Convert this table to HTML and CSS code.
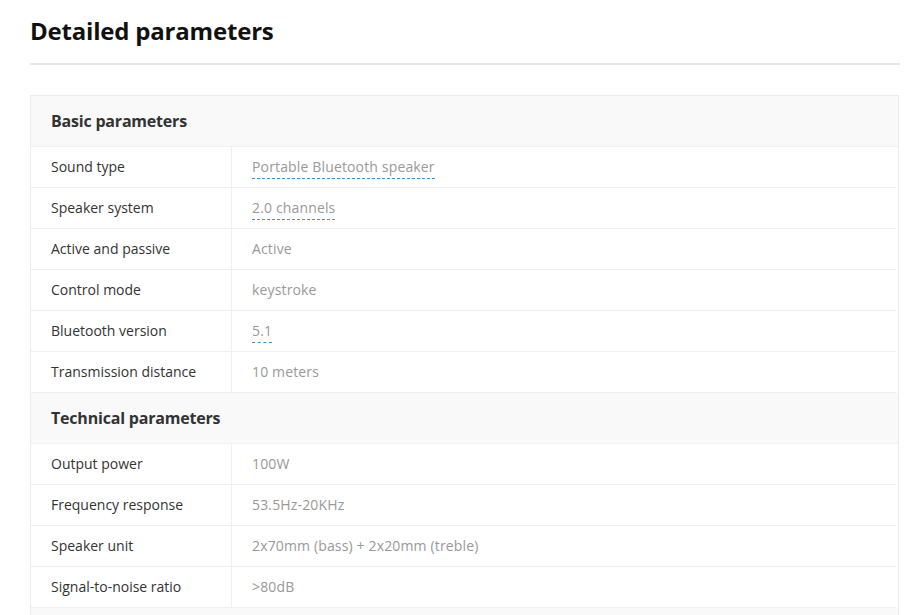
FILE: index.html
```html
<!DOCTYPE html>
<html>
<head>
<meta charset="utf-8">
<link rel="stylesheet" href="styles.css">
</head>
<body>
<div class="page">
  <h1 class="title">Detailed parameters</h1>
  <div class="params">
    <div class="group-head">Basic parameters</div>
    <div class="row"><div class="label">Sound type</div><div class="value"><span class="link">Portable Bluetooth speaker</span></div></div>
    <div class="row"><div class="label">Speaker system</div><div class="value"><span class="link">2.0 channels</span></div></div>
    <div class="row"><div class="label">Active and passive</div><div class="value">Active</div></div>
    <div class="row"><div class="label">Control mode</div><div class="value">keystroke</div></div>
    <div class="row"><div class="label">Bluetooth version</div><div class="value"><span class="link">5.1</span></div></div>
    <div class="row"><div class="label">Transmission distance</div><div class="value">10 meters</div></div>
    <div class="group-head">Technical parameters</div>
    <div class="row"><div class="label">Output power</div><div class="value">100W</div></div>
    <div class="row"><div class="label">Frequency response</div><div class="value">53.5Hz-20KHz</div></div>
    <div class="row"><div class="label">Speaker unit</div><div class="value">2x70mm (bass) + 2x20mm (treble)</div></div>
    <div class="row"><div class="label">Signal-to-noise ratio</div><div class="value">&gt;80dB</div></div>
    <div class="group-tail"></div>
  </div>
</div>
</body>
</html>
```
FILE: styles.css
```css
html, body {
  margin: 0;
  padding: 0;
  background: #fff;
}
body {
  font-family: "Open Sans", "Noto Sans", Arial, sans-serif;
  color: #333;
  height: 615px;
  overflow: hidden;
}
.page {
  padding: 0 4px 0 30px;
}
.title {
  margin: 0;
  padding-top: 14px;
  height: 65px;
  box-sizing: border-box;
  font-size: 24px;
  line-height: 34px;
  font-weight: 700;
  color: #111;
  border-bottom: 2px solid #e6e6e6;
  letter-spacing: -0.2px;
}
.params {
  margin-top: 30px;
  border: 1px solid #ececec;
  border-bottom: none;
  margin-right: 1px;
}
.group-head {
  height: 50px;
  line-height: 50px;
  padding-left: 20px;
  background: #f9f9f9;
  font-size: 16px;
  font-weight: 700;
  color: #333;
  border-bottom: 1px solid #f1f1f1;
  letter-spacing: -0.2px;
}
.group-tail {
  height: 8px;
  background: #f9f9f9;
}
.row {
  display: flex;
  height: 40px;
  border-bottom: 1px solid #efefef;
  margin-right: 2px;
}
.label {
  width: 180px;
  padding-left: 20px;
  line-height: 40px;
  font-size: 14px;
  color: #333;
  border-right: 1px solid #f0f0f0;
}
.value {
  padding-left: 20px;
  line-height: 40px;
  font-size: 14px;
  color: #999;
  letter-spacing: 0.15px;
}
.link {
  border-bottom: 1px dashed #3f8fd2;
  padding-bottom: 2px;
}
```
